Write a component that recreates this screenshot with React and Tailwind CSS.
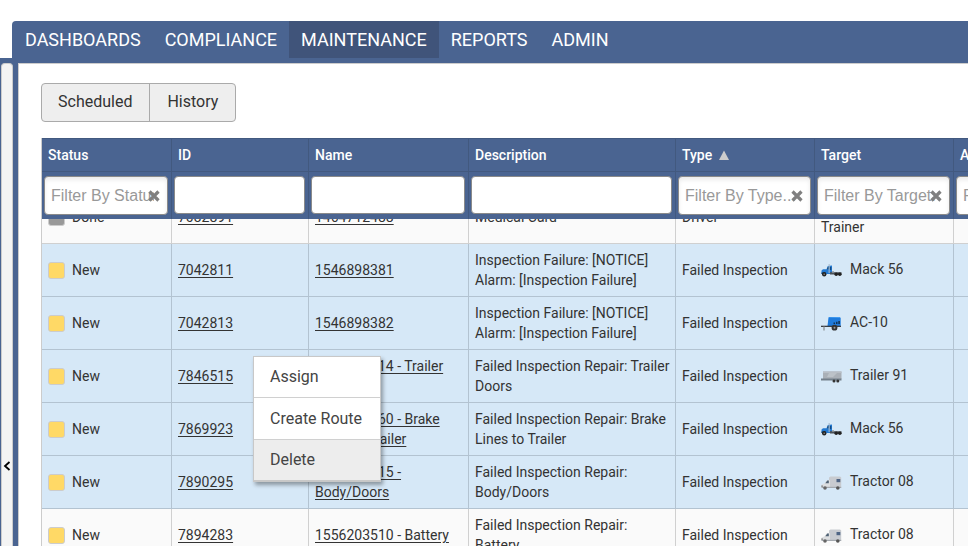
import React, { useState } from "react";

const tabs = ["DASHBOARDS", "COMPLIANCE", "MAINTENANCE", "REPORTS", "ADMIN"];

const columns = [
  { label: "Status", placeholder: "Filter By Status..." },
  { label: "ID" },
  { label: "Name" },
  { label: "Description" },
  { label: "Type", placeholder: "Filter By Type...", sorted: true },
  { label: "Target", placeholder: "Filter By Target..." },
  { label: "Assigned To", placeholder: "Filter By Assigned..." },
];

const rows = [
  { status: "Done", id: "7032891", name: "1464712488", desc: "Medical Card", type: "Driver", target: "Driver Trainer" },
  { status: "New", id: "7042811", name: "1546898381", desc: "Inspection Failure: [NOTICE] Alarm: [Inspection Failure]", type: "Failed Inspection", target: "Mack 56", icon: "truck", selected: true },
  { status: "New", id: "7042813", name: "1546898382", desc: "Inspection Failure: [NOTICE] Alarm: [Inspection Failure]", type: "Failed Inspection", target: "AC-10", icon: "compressor", selected: true },
  { status: "New", id: "7846515", name: "1555093114 - Trailer Doors", desc: "Failed Inspection Repair: Trailer Doors", type: "Failed Inspection", target: "Trailer 91", icon: "trailer", selected: true },
  { status: "New", id: "7869923", name: "1555620860 - Brake Lines to Trailer", desc: "Failed Inspection Repair: Brake Lines to Trailer", type: "Failed Inspection", target: "Mack 56", icon: "truck", selected: true },
  { status: "New", id: "7890295", name: "1556117215 - Body/Doors", desc: "Failed Inspection Repair: Body/Doors", type: "Failed Inspection", target: "Tractor 08", icon: "tractor", selected: true },
  { status: "New", id: "7894283", name: "1556203510 - Battery", desc: "Failed Inspection Repair: Battery", type: "Failed Inspection", target: "Tractor 08", icon: "tractor" },
];

const TargetIcon = ({ kind }) => (
  <svg viewBox="0 0 21 14" className="w-[21px] h-[14px] shrink-0" aria-hidden="true">
    {kind === "truck" && (
      <>
        <path d="M0.5 10V6.5L2 5.2h3.5L6.8 2 11 1.5V10z" fill="#2479d0" />
        <path d="M0.5 8.5h4V10h-4z" fill="#16466f" />
        <path d="M6 5.2l1-2.4h1.2v2.4z" fill="#16466f" />
        <path d="M9 3h1.3v3H9z" fill="#124b86" />
        <path d="M7.6 0h1.1v9H7.6z" fill="#a9bccd" />
        <path d="M9 8.2h11.5v2.3H9z" fill="#4b5157" />
        <path d="M11 7.2h2v1.5h-2z" fill="#8a929a" />
        <circle cx="3.2" cy="10.3" r="2.2" fill="#222" />
        <circle cx="3.2" cy="10.3" r="0.8" fill="#888" />
        <circle cx="15.2" cy="10.3" r="1.8" fill="#222" />
        <circle cx="18.8" cy="10.3" r="1.8" fill="#222" />
      </>
    )}
    {kind === "compressor" && (
      <>
        <path d="M7.5 0.5L8.3 0H18.5l1.2 1v8H6.5z" fill="#1f7bdc" />
        <path d="M7.5 0.5L8.3 0H18.5l0.8 0.9z" fill="#48a0f3" />
        <path d="M12.5 5.5H14V7h-1.5zM15 4.7h1.5V7H15zM17.3 4h1.6v3h-1.6z" fill="#123456" />
        <path d="M0 8.7h20V10H0z" fill="#3a3f44" />
        <path d="M2.5 9h1v4.5h-1z" fill="#777" />
        <circle cx="13.5" cy="10.7" r="2.9" fill="#333" />
        <circle cx="13.5" cy="10.7" r="1" fill="#999" />
      </>
    )}
    {kind === "trailer" && (
      <>
        <path d="M2 1.5h18.5V9H2z" fill="#aab0b7" />
        <path d="M2 1.5h18.5V3H2z" fill="#b9bfc6" />
        <path d="M8 3h8l-4 4H6z" fill="#bcc2c8" />
        <path d="M0 8.5h20.5v2H0z" fill="#74808b" />
        <circle cx="13" cy="11" r="1.5" fill="#333" />
        <circle cx="16.8" cy="11" r="1.5" fill="#333" />
      </>
    )}
    {kind === "tractor" && (
      <>
        <path d="M8 12V1.5L9.5 0.5H19l1.2 1V12z" fill="#c8cbd0" />
        <path d="M0.5 12V8.8L3.5 7.3 6 4h3v8z" fill="#dcdee0" />
        <path d="M4.3 7.3L6.3 4.6h1.5v2.7z" fill="#4f6274" />
        <path d="M15.5 3h3.8v3.2h-3.8z" fill="#4f6585" />
        <path d="M0.5 10.8h19.7V12H0.5z" fill="#a3a8ae" />
        <path d="M0.3 9.5h1.6v1.2H0.3z" fill="#777" />
        <circle cx="4" cy="12" r="1.8" fill="#666" />
        <circle cx="16.8" cy="12" r="1.8" fill="#555" />
      </>
    )}
  </svg>
);

const ColumnWidths = () => (
  <colgroup>
    <col className="w-[130px]" />
    <col className="w-[137px]" />
    <col className="w-[160px]" />
    <col className="w-[207px]" />
    <col className="w-[139px]" />
    <col className="w-[139px]" />
    <col className="w-[139px]" />
  </colgroup>
);

const FilterField = ({ label, placeholder }) => (
  <div className="relative">
    <input
      type="text"
      aria-label={`Filter ${label}`}
      placeholder={placeholder}
      className={`block w-full rounded border border-[#8a8a8a] bg-white pl-1.5 font-['Liberation_Sans',Arial,sans-serif] text-base font-normal text-[#333] placeholder:text-[#999] ${
        placeholder ? "h-[39px] pr-[13px] shadow-[inset_0_3px_4px_#ececec]" : "h-[38px]"
      }`}
    />
    {placeholder && (
      <button type="button" aria-label={`Clear ${label}`} className="absolute right-2 top-[14px]">
        <svg viewBox="0 0 12 12" className="block size-3">
          <path d="M1.5 1.5l9 9M10.5 1.5l-9 9" stroke="#808080" strokeWidth="3.2" />
        </svg>
      </button>
    )}
  </div>
);

const cell = "border-r border-b py-1.5 pl-1.5 align-middle";

const Row = ({ row }) => {
  const tone = row.selected
    ? "bg-[#d6e8f7] [&>td]:border-[#b3c3d1]"
    : "bg-[#fafafa] [&>td]:border-[#d0d0d0]";
  return (
    <tr className={tone}>
      <td className={cell}>
        <div className="flex items-center gap-[7px]">
          <span
            className={`size-[17px] rounded-[3px] border border-[#ccc] ${
              row.status === "New" ? "bg-[#ffd966]" : "bg-[#999]"
            }`}
          />
          {row.status}
        </div>
      </td>
      <td className={cell}>
        <a href="#" className="underline underline-offset-2">{row.id}</a>
      </td>
      <td className={cell}>
        <a href="#" className="underline underline-offset-2">{row.name}</a>
      </td>
      <td className={cell}>
        <div className="min-h-10 content-center">{row.desc}</div>
      </td>
      <td className={cell}>{row.type}</td>
      <td className={cell}>
        {row.icon ? (
          <div className="flex items-center gap-2 pb-0.5">
            <div className="pt-1">
              <TargetIcon kind={row.icon} />
            </div>
            {row.target}
          </div>
        ) : (
          <div className="w-14">{row.target}</div>
        )}
      </td>
      <td className={cell} />
    </tr>
  );
};

const ContextMenu = () => (
  <div
    role="menu"
    className="absolute left-[253px] top-[356px] w-32 border border-b-2 border-[#c8c8c8] bg-white text-base text-[#444] shadow-[2px_3px_4px_rgba(0,0,0,0.35)]"
  >
    <button type="button" role="menuitem" className="block h-10 w-full px-4 text-left">Assign</button>
    <button type="button" role="menuitem" className="block h-[43px] w-full border-y border-[#d0d0d0] px-4 text-left">Create Route</button>
    <button type="button" role="menuitem" className="block h-10 w-full bg-[#ededed] px-4 text-left">Delete</button>
  </div>
);

const App = () => {
  const [active, setActive] = useState("MAINTENANCE");

  return (
    <div className="relative flex h-screen flex-col overflow-hidden bg-white pt-[21px] font-[Roboto,sans-serif] text-[#333]">
      {/* Main navigation */}
      <nav className="ml-3 flex h-[37px] shrink-0 rounded-tl bg-[#4a6491] pl-px">
        {tabs.map((tab) => (
          <button
            key={tab}
            type="button"
            onClick={() => setActive(tab)}
            className={`px-3 text-lg text-white ${tab === active ? "bg-[#40547a]" : ""}`}
          >
            {tab}
          </button>
        ))}
      </nav>

      <div className="flex min-h-0 flex-1 bg-[#4a6491] pl-px pt-[5px]">
        {/* Collapsed side panel */}
        <button
          type="button"
          aria-label="Expand side panel"
          className="mr-[5px] flex w-3 shrink-0 items-start justify-center rounded-t border border-b-0 border-[#ccc] bg-[#f4f4f4] pt-[397px]"
        >
          <svg viewBox="0 0 8 10" className="h-2.5 w-2 shrink-0">
            <path d="M6.5 1L2 5l4.5 4" fill="none" stroke="#000" strokeWidth="1.8" />
          </svg>
        </button>

        <main className="min-w-0 flex-1 overflow-hidden border-l border-t border-[#ccc] bg-white pl-[22px] pt-[19px]">
          <div className="flex h-[39px] w-fit overflow-hidden rounded border border-[#aaa] bg-[#eee]">
            <button type="button" className="border-r border-[#aaa] pb-0.5 pl-4 pr-[17px] text-base">Scheduled</button>
            <button type="button" className="px-[17px] pb-0.5 text-base">History</button>
          </div>

          {/* Work orders */}
          <div className="mt-4 w-[1052px] border-l border-[#ccc] text-sm leading-5">
            <table className="relative z-10 w-full table-fixed border-separate border-spacing-0 bg-[#4a6491] text-left text-white">
              <ColumnWidths />
              <thead>
                <tr>
                  {columns.map((col) => (
                    <th key={col.label} className="h-[34px] border-b border-r border-t border-[#42597f] px-1.5 py-0 font-medium">
                      <div className="flex items-center gap-[7px]">
                        {col.label}
                        {col.sorted && (
                          <svg viewBox="0 0 10 10" className="size-2.5" aria-hidden="true">
                            <path d="M5 0.5L10 10H0z" fill="#ccc" />
                          </svg>
                        )}
                      </div>
                    </th>
                  ))}
                </tr>
                <tr>
                  {columns.map((col) => (
                    <th key={col.label} className="h-[47px] border-r border-[#42597f] pb-0 pl-0.5 pr-[3px] pt-1 align-top">
                      <FilterField label={col.label} placeholder={col.placeholder} />
                    </th>
                  ))}
                </tr>
              </thead>
            </table>
            <table className="-mt-7 w-full table-fixed border-separate border-spacing-0">
              <ColumnWidths />
              <tbody>
                {rows.map((row) => (
                  <Row key={row.id} row={row} />
                ))}
              </tbody>
            </table>
          </div>
        </main>
      </div>

      <ContextMenu />
    </div>
  );
};

export default App;
